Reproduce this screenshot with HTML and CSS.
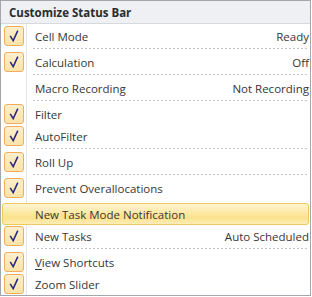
FILE: index.html
```html
<!DOCTYPE html>
<html>
<head>
<meta charset="utf-8">
<link rel="stylesheet" href="styles.css">
</head>
<body>
<div class="menu">
  <div class="header">Customize Status Bar</div>
  <div class="body">
    <div class="item"><span class="check"><svg viewBox="0 0 18 18" width="18" height="18"><path d="M5.2 8.8 L8.2 13.6 L12.8 3.6" /></svg></span><span class="label">Cell Mode</span><span class="value">Ready</span></div>
    <div class="sep"></div>
    <div class="item"><span class="check"><svg viewBox="0 0 18 18" width="18" height="18"><path d="M5.2 8.8 L8.2 13.6 L12.8 3.6" /></svg></span><span class="label">Calculation</span><span class="value">Off</span></div>
    <div class="sep"></div>
    <div class="item"><span class="nocheck"></span><span class="label">Macro Recording</span><span class="value">Not Recording</span></div>
    <div class="sep"></div>
    <div class="item"><span class="check"><svg viewBox="0 0 18 18" width="18" height="18"><path d="M5.2 8.8 L8.2 13.6 L12.8 3.6" /></svg></span><span class="label">Filter</span></div>
    <div class="item"><span class="check"><svg viewBox="0 0 18 18" width="18" height="18"><path d="M5.2 8.8 L8.2 13.6 L12.8 3.6" /></svg></span><span class="label">AutoFilter</span></div>
    <div class="sep"></div>
    <div class="item"><span class="check"><svg viewBox="0 0 18 18" width="18" height="18"><path d="M5.2 8.8 L8.2 13.6 L12.8 3.6" /></svg></span><span class="label">Roll Up</span></div>
    <div class="sep"></div>
    <div class="item"><span class="check"><svg viewBox="0 0 18 18" width="18" height="18"><path d="M5.2 8.8 L8.2 13.6 L12.8 3.6" /></svg></span><span class="label">Prevent Overallocations</span></div>
    <div class="sep blank"></div>
    <div class="item hover"><span class="nocheck"></span><span class="label">New Task Mode Notification</span></div>
    <div class="item"><span class="check"><svg viewBox="0 0 18 18" width="18" height="18"><path d="M5.2 8.8 L8.2 13.6 L12.8 3.6" /></svg></span><span class="label">New Tasks</span><span class="value">Auto Scheduled</span></div>
    <div class="sep"></div>
    <div class="item"><span class="check"><svg viewBox="0 0 18 18" width="18" height="18"><path d="M5.2 8.8 L8.2 13.6 L12.8 3.6" /></svg></span><span class="label"><u>V</u>iew Shortcuts</span></div>
    <div class="item"><span class="check"><svg viewBox="0 0 18 18" width="18" height="18"><path d="M5.2 8.8 L8.2 13.6 L12.8 3.6" /></svg></span><span class="label">Zoom Slider</span></div>
  </div>
</div>
</body>
</html>
```

FILE: styles.css
```css
html, body {
  margin: 0;
  padding: 0;
  background: #ffffff;
}

.menu {
  width: 311px;
  box-sizing: border-box;
  border: 1px solid #a3a6ab;
  background: #ffffff;
  font-family: "Open Sans", "Noto Sans", sans-serif;
  font-size: 11.5px;
  color: #363636;
}

.header {
  height: 22px;
  border-bottom: 1px solid #d6d9de;
  background: #eef0f4;
  font-weight: bold;
  color: #2c2c2c;
  display: flex;
  align-items: center;
  padding-left: 8px;
}

.body {
  padding-top: 1px;
  background: linear-gradient(to right, #ffffff 0, #ffffff 25px, #e3e4e6 25px, #e3e4e6 26px, #ffffff 26px);
}

.item {
  height: 22px;
  display: flex;
  align-items: center;
  padding: 0 1px 0 3px;
  box-sizing: border-box;
}

.check, .nocheck {
  width: 20px;
  height: 20px;
  flex: none;
  box-sizing: border-box;
  margin-right: 11px;
}

.check {
  border: 1px solid #f1ac5f;
  border-radius: 3px;
  background: linear-gradient(#fdefcb, #fce3a8);
  display: flex;
  align-items: center;
  justify-content: center;
}

.check svg path {
  fill: none;
  stroke: #27277c;
  stroke-width: 1.5;
  stroke-linejoin: miter;
}

.label {
  flex: 1;
  white-space: nowrap;
}

.value {
  white-space: nowrap;
}

.label u {
  text-decoration: underline;
  text-underline-offset: 2px;
}

.sep {
  height: 4px;
  box-sizing: border-box;
  padding-top: 1px;
  margin-left: 32px;
  margin-right: 2px;
}

.sep::before {
  content: "";
  display: block;
  height: 1px;
  background: repeating-linear-gradient(to right, #c4c4c4 0, #c4c4c4 2px, transparent 2px, transparent 4px);
}

.sep.blank::before {
  background: none;
}

.hover {
  margin: 0 1px;
  padding-left: 1px;
  padding-right: 0;
  border: 1px solid #ecc95c;
  border-radius: 3px;
  background: linear-gradient(#fef4d2 0%, #fde9a4 45%, #fde28c 70%, #fdeeb8 100%);
}
```
